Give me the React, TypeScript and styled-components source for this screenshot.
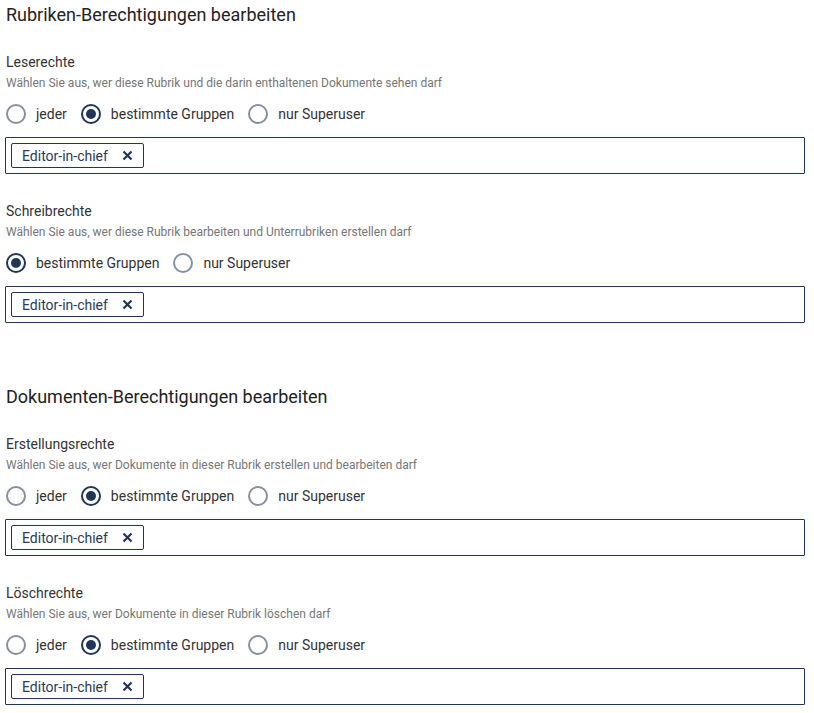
import React from "react";
import styled, { createGlobalStyle } from "styled-components";

const Global = createGlobalStyle`
  html, body { margin: 0; padding: 0; background: #fff; }
  body { font-family: Roboto, "Noto Sans", Arial, sans-serif; color: #2b2b2b; }
  * { box-sizing: border-box; }
`;

const Page = styled.div`
  width: 800px;
  margin-left: 5px;
  display: flex;
  flex-direction: column;
`;

const Section = styled.section<{ $gapTop: number }>`
  margin-top: ${(p) => p.$gapTop}px;
  display: flex;
  flex-direction: column;
`;

const Heading = styled.h2`
  margin: 0 0 0 1px;
  font-size: 18px;
  line-height: 24px;
  font-weight: 400;
  color: #222;
`;

const Field = styled.div<{ $gapTop: number }>`
  margin-top: ${(p) => p.$gapTop}px;
  display: flex;
  flex-direction: column;
`;

const Label = styled.div`
  margin-left: 1px;
  font-size: 14px;
  line-height: 20px;
  color: #333;
`;

const Description = styled.div`
  margin: 3px 0 0 1px;
  font-size: 12px;
  line-height: 16px;
  color: #767676;
`;

const RadioRow = styled.div`
  margin: 11px 0 0 1px;
  display: flex;
  align-items: center;
  gap: 14px;
  height: 24px;
`;

const RadioOption = styled.label`
  display: flex;
  align-items: center;
  gap: 10px;
  font-size: 14px;
  line-height: 20px;
  color: #333;
  cursor: pointer;
`;

const Circle = styled.span<{ $checked: boolean }>`
  width: 20px;
  height: 20px;
  border-radius: 50%;
  border: 2px solid ${(p) => (p.$checked ? "#203659" : "#8590a2")};
  display: flex;
  align-items: center;
  justify-content: center;
  &::after {
    content: "";
    display: ${(p) => (p.$checked ? "block" : "none")};
    width: 10px;
    height: 10px;
    border-radius: 50%;
    background: #203659;
  }
`;

const TagInput = styled.div`
  margin-top: 11px;
  height: 37px;
  border: 1px solid #203659;
  border-radius: 1px;
  padding: 5px;
  display: flex;
  align-items: center;
  gap: 6px;
`;

const Chip = styled.span`
  height: 25px;
  display: inline-flex;
  align-items: center;
  padding: 0 10px 0 10px;
  border: 1px solid #203659;
  border-radius: 2px;
  font-size: 14px;
  color: #2a3b57;
  gap: 14px;
`;

const Close = styled.span`
  display: inline-flex;
  width: 11px;
  height: 11px;
`;

type Opt = { label: string; checked: boolean };

const Radio = ({ label, checked }: Opt) => (
  <RadioOption>
    <Circle $checked={checked} />
    {label}
  </RadioOption>
);

const PermissionField = ({
  label,
  description,
  options,
  gapTop,
}: {
  label: string;
  description: string;
  options: Opt[];
  gapTop: number;
}) => (
  <Field $gapTop={gapTop}>
    <Label>{label}</Label>
    <Description>{description}</Description>
    <RadioRow>
      {options.map((o) => (
        <Radio key={o.label} {...o} />
      ))}
    </RadioRow>
    <TagInput>
      <Chip>
        Editor-in-chief
        <Close>
          <svg width="11" height="11" viewBox="0 0 11 11">
            <path d="M1.5 1.5 L9.5 9.5 M9.5 1.5 L1.5 9.5" stroke="#203659" strokeWidth="2.2" strokeLinecap="butt" />
          </svg>
        </Close>
      </Chip>
    </TagInput>
  </Field>
);

const three: Opt[] = [
  { label: "jeder", checked: false },
  { label: "bestimmte Gruppen", checked: true },
  { label: "nur Superuser", checked: false },
];
const two: Opt[] = [
  { label: "bestimmte Gruppen", checked: true },
  { label: "nur Superuser", checked: false },
];

export default function App() {
  return (
    <>
      <Global />
      <Page>
        <Section $gapTop={3}>
          <Heading>Rubriken-Berechtigungen bearbeiten</Heading>
          <PermissionField
            gapTop={25}
            label="Leserechte"
            description="Wählen Sie aus, wer diese Rubrik und die darin enthaltenen Dokumente sehen darf"
            options={three}
          />
          <PermissionField
            gapTop={27}
            label="Schreibrechte"
            description="Wählen Sie aus, wer diese Rubrik bearbeiten und Unterrubriken erstellen darf"
            options={two}
          />
        </Section>
        <Section $gapTop={62}>
          <Heading>Dokumenten-Berechtigungen bearbeiten</Heading>
          <PermissionField
            gapTop={25}
            label="Erstellungsrechte"
            description="Wählen Sie aus, wer Dokumente in dieser Rubrik erstellen und bearbeiten darf"
            options={three}
          />
          <PermissionField
            gapTop={27}
            label="Löschrechte"
            description="Wählen Sie aus, wer Dokumente in dieser Rubrik löschen darf"
            options={three}
          />
        </Section>
      </Page>
    </>
  );
}
